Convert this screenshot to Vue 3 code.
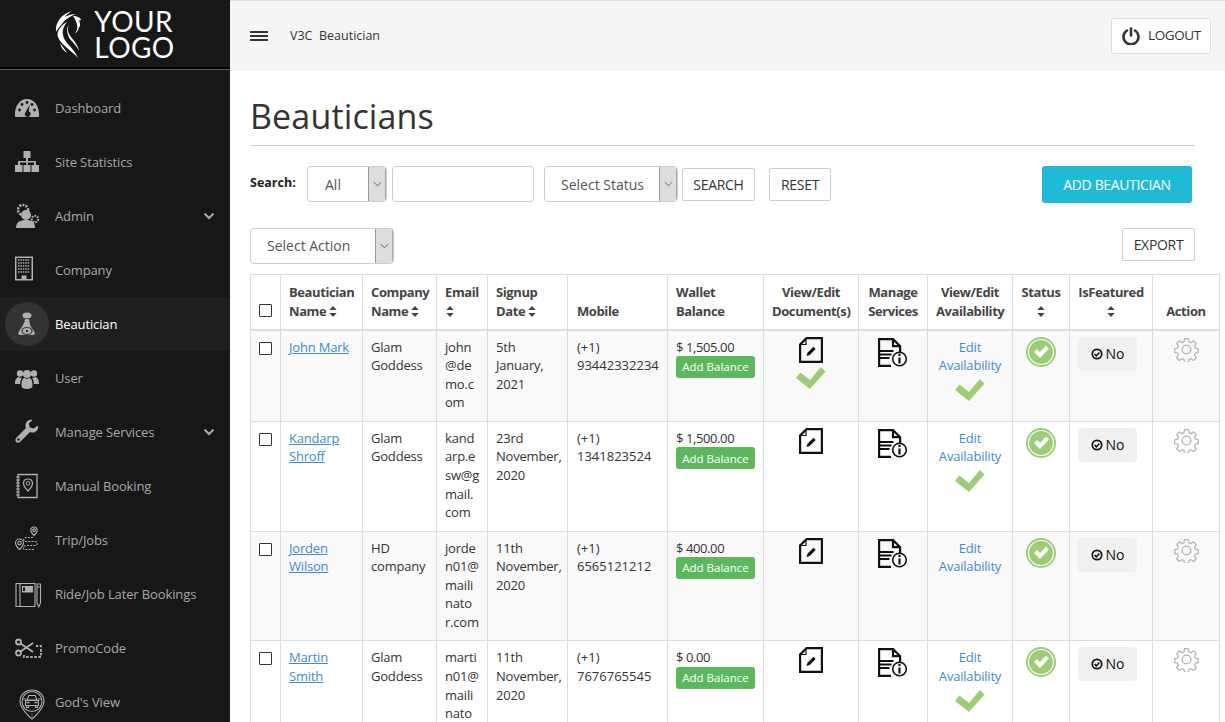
<script setup>
import { ref } from 'vue';

const menu = ref([
  { label: 'Dashboard', icon: 'gauge' },
  { label: 'Site Statistics', icon: 'org' },
  { label: 'Admin', icon: 'admin', sub: true },
  { label: 'Company', icon: 'company' },
  { label: 'Beautician', icon: 'driver', active: true },
  { label: 'User', icon: 'users' },
  { label: 'Manage Services', icon: 'wrench', sub: true },
  { label: 'Manual Booking', icon: 'manual' },
  { label: 'Trip/Jobs', icon: 'trip' },
  { label: 'Ride/Job Later Bookings', icon: 'later' },
  { label: 'PromoCode', icon: 'promo' },
  { label: "God's View", icon: 'god' },
]);

const headers = [
  { lines: ['Beautician', 'Name'], sort: 'inline' },
  { lines: ['Company', 'Name'], sort: 'inline' },
  { lines: ['Email'], sort: 'below' },
  { lines: ['Signup', 'Date'], sort: 'inline' },
  { lines: ['Mobile'] },
  { lines: ['Wallet', 'Balance'] },
  { lines: ['View/Edit', 'Document(s)'], center: true },
  { lines: ['Manage', 'Services'], center: true },
  { lines: ['View/Edit', 'Availability'], center: true },
  { lines: ['Status'], sort: 'below', center: true },
  { lines: ['IsFeatured'], sort: 'below', center: true },
  { lines: ['Action'], center: true },
];

const rows = ref([
  {
    name: ['John Mark'], company: ['Glam', 'Goddess'], email: ['john', '@de', 'mo.c', 'om'],
    date: ['5th', 'January,', '2021'], mobile: '93442332234', balance: '$ 1,505.00', docOk: true, availOk: true,
  },
  {
    name: ['Kandarp', 'Shroff'], company: ['Glam', 'Goddess'], email: ['kand', 'arp.e', 'sw@g', 'mail.', 'com'],
    date: ['23rd', 'November,', '2020'], mobile: '1341823524', balance: '$ 1,500.00', docOk: false, availOk: true,
  },
  {
    name: ['Jorden', 'Wilson'], company: ['HD', 'company'], email: ['jorde', 'n01@', 'maili', 'nato', 'r.com'],
    date: ['11th', 'November,', '2020'], mobile: '6565121212', balance: '$ 400.00', docOk: false, availOk: false,
  },
  {
    name: ['Martin', 'Smith'], company: ['Glam', 'Goddess'], email: ['marti', 'n01@', 'maili', 'nato', 'r.com'],
    date: ['11th', 'November,', '2020'], mobile: '7676765545', balance: '$ 0.00', docOk: false, availOk: true,
  },
]);
</script>

<template>
  <div class="page">
    <aside class="sidebar">
      <div class="logo">
        <svg class="logo-mark" viewBox="0 0 27 48" fill="#fff">
          <path d="M1 22C0 13 6 4 17 1c-3 2-5 3-7 6 3-2 7-3 11-3-5 2-11 5-14 10C4 17 2 20 1 22z" />
          <path d="M3 27C1 22 6 15 12 12c-3 4-5 8-4 13 1 7 7 10 11 16 2 3 3 5 4 7-3-4-8-7-12-11-3-3-6-5-8-10z" />
          <path d="M5 33c2 3 5 6 7 10-3-2-6-5-7-10z" />
          <path d="M14 14c-2 5-1 9 2 13 3 4 7 8 8 14-2-5-6-8-9-12-3-5-4-10-1-15z" />
          <path d="M18 6c4 0 8 2 8 4l-2 .5c1 3 2 5 0 7-1 3-2 5-4 6 2-3 3-6 2-9-1-3-2-6-4-8.500z" />
        </svg>
        <div class="logo-text">YOUR<br />LOGO</div>
      </div>

      <nav class="menu">
        <a v-for="item in menu" :key="item.label" class="menu-item" :class="{ active: item.active }">
          <span class="menu-ico">
            <svg viewBox="0 0 26 26" fill="#b0b0b0" stroke="none">
              <template v-if="item.icon === 'gauge'">
                <path d="M1 21C.2 11 6 4 13 4s12.800 7 12 17c0 .6-.5 1-1 1H2c-.5 0-1-.4-1-1z" />
                <g fill="#171717">
                  <circle cx="5.500" cy="15" r="1.400" /><circle cx="8" cy="9.500" r="1.400" /><circle cx="13" cy="7.500" r="1.400" /><circle cx="18" cy="9.500" r="1.400" /><circle cx="20.500" cy="15" r="1.400" />
                  <path d="M15.500 10 14.800 16.500a2.800 2.800 0 1 1-3.400 1z" />
                </g>
              </template>
              <template v-else-if="item.icon === 'org'">
                <path d="M9.500 2h7v7H14v3h7c.6 0 1 .4 1 1v3h3v7h-7.500v-7H20v-2.500h-6.200V16H16.500v7h-7v-7h2.700v-2.500H6V16h2.500v7H1v-7h3v-3c0-.6.4-1 1-1h7V9H9.500z" />
              </template>
              <template v-else-if="item.icon === 'admin'">
                <circle cx="9" cy="7" r="5" fill="none" stroke="#b0b0b0" stroke-width="2.500" stroke-dasharray="2 1.200" />
                <circle cx="21" cy="16" r="3.200" fill="none" stroke="#b0b0b0" stroke-width="2" stroke-dasharray="1.800 1" />
                <circle cx="12" cy="12" r="5" />
                <path d="M2 25c0-6 4-8 10-8s9 2 9 8z" />
              </template>
              <template v-else-if="item.icon === 'company'">
                <g transform="translate(-3 -1.500)">
                  <path fill-rule="evenodd" d="M4 1h18v24H4zM5.500 2.500v21h5V20h5v3.500h5v-21z" />
                  <path d="M7 4.500h12M7 7.500h12M7 10.500h12M7 13.500h12M7 16.500h12" stroke="#b0b0b0" stroke-width="1.500" stroke-dasharray="1.500 .9" />
                </g>
              </template>
              <template v-else-if="item.icon === 'driver'">
                <ellipse cx="13" cy="4.500" rx="4.500" ry="3" />
                <rect x="10.500" y="8" width="5" height="3" rx="1.500" />
                <path d="M10.500 11h5l1 4 4 6c.8 1.600 0 3-1.500 3h-13c-1.500 0-2.300-1.400-1.500-3l4-6z" />
                <ellipse cx="13" cy="20" rx="5" ry="3.500" fill="none" stroke="#333" stroke-width="1.200" />
                <circle cx="13" cy="20" r="1.200" fill="#333" />
              </template>
              <template v-else-if="item.icon === 'users'">
                <circle cx="6" cy="8.500" r="3.200" /><circle cx="20" cy="8.500" r="3.200" /><circle cx="13" cy="9" r="4" />
                <path d="M1 19c0-5 2-7 4-7 1 1 2 1 3 .8-1.200 1.500-1.800 3.700-1.800 6.200zM25 19c0-5-2-7-4-7-1 1-2 1-3 .8 1.200 1.500 1.800 3.700 1.800 6.200z" />
                <path d="M7.500 21c0-6 1.500-8 3-8 1.500 1 3.500 1 5 0 1.500 0 3 2 3 8 0 2-2.500 3-5.500 3s-5.500-1-5.500-3z" />
              </template>
              <template v-else-if="item.icon === 'wrench'">
                <path d="M24 6.500c.8 3-1 6.500-4.500 7-1.500.2-2.500 0-3.500-.5L6.500 22.500c-1.500 1.500-3.500 1.500-4.500.5s-1-3 .5-4.500L12 9c-.5-1-.7-2-.5-3.500C12 2 15.500.2 18.500 1L14.800 4.500l1 4 4 1z" />
                <circle cx="4.500" cy="20.500" r="1.200" fill="#171717" />
              </template>
              <template v-else-if="item.icon === 'manual'">
                <path d="M4 1.500h19v23H4z" fill="none" stroke="#b0b0b0" stroke-width="1.300" />
                <path d="M2 4h4M2 7h4M2 10h4M2 13h4M2 16h4M2 19h4M2 22h4" stroke="#b0b0b0" stroke-width="1.200" />
                <path d="M14 6c-3 0-4.500 2-4.500 4.200 0 3 4.500 7.800 4.500 7.800s4.500-4.800 4.500-7.800C18.500 8 17 6 14 6z" fill="#171717" stroke="#b0b0b0" stroke-width="1.200" />
                <circle cx="14" cy="10.300" r="1.800" fill="none" stroke="#b0b0b0" />
              </template>
              <template v-else-if="item.icon === 'trip'">
                <g fill="none" stroke="#b0b0b0" stroke-width="1.100">
                  <path d="M5.500 12c-2.500 0-4 2-4 4 0 2.700 4 6.500 4 6.500s4-3.800 4-6.500c0-2-1.500-4-4-4z" />
                  <circle cx="5.500" cy="16" r="1.700" />
                  <path d="M20 0c-2 0-3.200 1.500-3.200 3.200 0 2.200 3.200 5.300 3.200 5.300s3.200-3.100 3.200-5.300C23.200 1.500 22 0 20 0z" />
                  <circle cx="20" cy="3.200" r="1.300" />
                  <path d="M19 10.500h-7c-3 0-3 4 0 4h9c3 0 3 4 0 4h-9c-2 0-3 2-2 4h11" stroke-dasharray="2 1.200" />
                </g>
              </template>
              <template v-else-if="item.icon === 'later'">
                <g fill="none" stroke="#b0b0b0" stroke-width="1.100">
                  <path d="M2 2.500h19v23H2zM6 2.500v23" />
                  <path d="M23 3h3.500v19l-1.750 4L23 22zM23 6h3.500" />
                </g>
                <path d="M8 5h11v6.500H8z" />
                <path d="M9 6.500h2v3.500H9z" fill="#171717" />
              </template>
              <template v-else-if="item.icon === 'promo'">
                <g fill="none" stroke="#b0b0b0" stroke-width="1.800">
                  <circle cx="4.500" cy="7" r="2.500" /><circle cx="4.500" cy="18" r="2.500" />
                  <path d="M6.500 8.500 19 17M6.500 16.500 19 8" />
                  <path d="M10 20v2h17V11h-5M27 15v2" stroke-dasharray="2.500 1.600" />
                </g>
              </template>
              <template v-else-if="item.icon === 'god'">
                <g transform="translate(5 0)">
                  <g fill="none" stroke="#b0b0b0" stroke-width="1.100">
                    <path d="M13 30S1 20 1 12.500C1 5.500 6.500 1 13 1s12 4.500 12 11.500C25 20 13 30 13 30z" />
                    <circle cx="13" cy="12.500" r="10" />
                    <path d="M13 24.500v1M13 27v1" />
                    <path d="M9.800 6.500h6.400l1.800 4.500H8zM6.500 11.500h13v5h-13zM7.500 16.500v2h2v-2M16.500 16.500v2h2v-2M4 10h3M19 10h3" />
                  </g>
                  <path d="M7.500 12.800h3v1.500h-3zM15.500 12.800h3v1.500h-3z" />
                </g>
              </template>
            </svg>
          </span>
          <span class="menu-label">{{ item.label }}</span>
          <svg v-if="item.sub" class="menu-caret" viewBox="0 0 12 8" fill="none" stroke="#aaa" stroke-width="2"><path d="M1.500 1.500 6 6l4.500-4.500" /></svg>
        </a>
      </nav>
    </aside>

    <main class="main">
      <header class="topbar">
        <div class="crumbs">
          <span class="burger"><i></i><i></i><i></i></span>
          <span class="crumb">V3C&nbsp; Beautician</span>
        </div>
        <button class="logout">
          <svg viewBox="0 0 18 18" fill="none" stroke="#333" stroke-width="2.600" stroke-linecap="round"><path d="M5 3.500a7.500 7.500 0 1 0 8 0M9 1.500v7" /></svg>
          LOGOUT
        </button>
      </header>

      <section class="content">
        <h1 class="title">Beauticians</h1>

        <div class="filters">
          <div class="filter-left">
            <label class="search-label">Search:</label>
            <div class="fake-select all"><span>All</span><b class="arrow"><svg viewBox="0 0 10 6" fill="none" stroke="#555"><path d="M1 1l4 4 4-4" /></svg></b></div>
            <input class="search-input" type="text" />
            <div class="fake-select status"><span>Select Status</span><b class="arrow"><svg viewBox="0 0 10 6" fill="none" stroke="#555"><path d="M1 1l4 4 4-4" /></svg></b></div>
            <button class="btn search-btn">SEARCH</button>
            <button class="btn reset-btn">RESET</button>
          </div>
          <button class="add-btn">ADD BEAUTICIAN</button>
        </div>

        <div class="actions">
          <div class="fake-select action"><span>Select Action</span><b class="arrow"><svg viewBox="0 0 10 6" fill="none" stroke="#555"><path d="M1 1l4 4 4-4" /></svg></b></div>
          <button class="btn export-btn">EXPORT</button>
        </div>

        <table class="grid">
          <colgroup>
            <col class="c-check" /><col class="c-name" /><col class="c-company" /><col class="c-email" /><col class="c-date" /><col class="c-mobile" />
            <col class="c-wallet" /><col class="c-doc" /><col class="c-serv" /><col class="c-avail" /><col class="c-status" /><col class="c-feat" /><col class="c-act" />
          </colgroup>
          <thead>
            <tr>
              <th><input type="checkbox" class="check head-check" /></th>
              <th v-for="h in headers" :key="h.lines[0] + h.lines.length" :class="{ center: h.center }">
                <template v-for="(line, i) in h.lines" :key="line">
                  <br v-if="i > 0" />{{ line }}
                </template>
                <svg v-if="h.sort" class="sort" :class="h.sort" viewBox="0 0 10 14" fill="#444"><path d="M1 5.500 5 1l4 4.500zM1 8.500h8L5 13z" /></svg>
              </th>
            </tr>
          </thead>
          <tbody>
            <tr v-for="row in rows" :key="row.mobile">
              <td><input type="checkbox" class="check" /></td>
              <td><a class="link"><template v-for="(l, i) in row.name" :key="l"><br v-if="i > 0" />{{ l }}</template></a></td>
              <td><span v-for="l in row.company" :key="l" class="ln">{{ l }}</span></td>
              <td><span v-for="l in row.email" :key="l" class="ln">{{ l }}</span></td>
              <td><span v-for="l in row.date" :key="l" class="ln">{{ l }}</span></td>
              <td class="plain"><span class="ln">(+1)</span><span class="ln">{{ row.mobile }}</span></td>
              <td>
                <span class="ln amount">{{ row.balance }}</span>
                <button class="balance-btn">Add Balance</button>
              </td>
              <td class="center">
                <svg class="doc-ico" viewBox="0 0 24 26" fill="none" stroke="#111" stroke-width="2.200">
                  <path d="M7.500 1.100h15.400v23.800H1.100V7.500z" />
                  <path d="M7 2v5.500H2" stroke-width="1.200" />
                  <path d="M7.500 19l1-3.200 6-6 2.200 2.200-6 6z" fill="#111" stroke="none" />
                </svg>
                <svg v-if="row.docOk" class="tick" viewBox="0 0 30 22" fill="#9ccc78"><path d="M0 11 4.500 5.500 14 13 25 0l4.500 4.500L14 22z" /></svg>
              </td>
              <td class="center">
                <svg class="serv-ico" viewBox="0 0 30 29" fill="none" stroke="#111" stroke-width="2.200">
                  <path d="M13 27.900H1.100V1.100h14l7 7v6M15 1.100v7h7" />
                  <path d="M1.500 13h14M1.500 16.500h12M1.500 20h10" stroke-width="1.800" />
                  <circle cx="21.500" cy="21" r="6.800" fill="#fff" stroke-width="1.600" />
                  <path d="M21.500 19.500v6M21.500 15.800v2.200" stroke-width="2.200" />
                </svg>
              </td>
              <td class="center">
                <a class="avail">Edit<br />Availability</a>
                <svg v-if="row.availOk" class="tick" viewBox="0 0 30 22" fill="#9ccc78"><path d="M0 11 4.500 5.500 14 13 25 0l4.500 4.500L14 22z" /></svg>
              </td>
              <td class="center">
                <svg class="status-ico" viewBox="0 0 30 30"><circle cx="15" cy="15" r="15" fill="#9ccc78" /><circle cx="15" cy="15" r="12.500" fill="none" stroke="#fff" stroke-width="1.200" /><path d="M8 15l3-3 3 3 6-6.500 3 3-9 9.500z" fill="#fff" /></svg>
              </td>
              <td>
                <button class="feat-btn">
                  <svg viewBox="0 0 14 14" fill="none" stroke="#111" stroke-width="2"><circle cx="7" cy="7" r="5.500" /><path d="M4.200 7 6.300 9.200 9.800 5.300" stroke-width="1.800" /></svg>
                  No
                </button>
              </td>
              <td class="center">
                <svg class="gear" viewBox="0 0 24 24" fill="none" stroke="#b5b5b5" stroke-width="1.300" stroke-linejoin="round">
                  <circle cx="12" cy="12" r="4.200" />
                  <path d="M10 1h4l.6 3.200 1.900.8 2.700-1.800 2.800 2.800-1.800 2.700.8 1.900 3 .6v4l-3 .6-.8 1.900 1.800 2.700-2.800 2.800-2.700-1.800-1.900.8-.6 3h-4l-.6-3-1.900-.8-2.700 1.800-2.800-2.800 1.800-2.700-.8-1.900-3-.6v-4l3-.6.8-1.900-1.800-2.700 2.800-2.800 2.700 1.800 1.900-.8z" transform="translate(.7 .7) scale(.94)" />
                </svg>
              </td>
            </tr>
          </tbody>
        </table>
      </section>
    </main>
  </div>
</template>

<style>
html, body { margin: 0; height: 722px; overflow: hidden; background: #fff; }
</style>

<style scoped>
.page {
  display: flex;
  height: 722px;
  overflow: hidden;
  font-family: "Open Sans", "Noto Sans", sans-serif;
  font-size: 13px;
  line-height: 1.42857;
  color: #333;
}

.sidebar {
  flex: 0 0 230px;
  background: #171717;
  overflow: hidden;
}

.logo {
  height: 69px;
  box-sizing: border-box;
  display: flex;
  justify-content: center;
  align-items: center;
  gap: 12px;
  border-bottom: 2px solid #000;
  box-shadow: 0 1px 0 #555;
}
.logo-mark { width: 27px; height: 48px; }
.logo-text {
  font-family: Lato, sans-serif;
  font-size: 28px;
  line-height: 26px;
  color: #fff;
  letter-spacing: 0.4px;
}

.menu { padding-top: 12px; }
.menu-item {
  height: 54px;
  display: flex;
  align-items: center;
  padding-left: 14px;
  color: #a8a8a8;
  letter-spacing: -0.12px;
}
.menu-item.active { background: #1f1f1f; color: #fff; }
.menu-ico { width: 26px; height: 26px; margin-right: 15px; flex: none; }
.menu-ico svg { display: block; width: 26px; height: 26px; overflow: visible; }
.menu-item.active .menu-ico { background: #333; border-radius: 50%; box-shadow: 0 0 0 9px #333; }
.menu-caret { width: 12px; height: 8px; margin-left: auto; margin-right: 15px; }

.main { flex: 1; min-width: 0; }

.topbar {
  height: 71px;
  box-sizing: border-box;
  border-top: 1px solid #ddd;
  background: #f5f5f5;
  display: flex;
  align-items: center;
  justify-content: space-between;
  padding: 0 14px 0 20px;
}
.crumbs { display: flex; align-items: center; }
.burger { width: 18px; margin-right: 22px; }
.burger i { display: block; height: 2px; background: #333; margin: 2px 0; }
.crumb { font-size: 12.500px; color: #333; }
.logout {
  width: 100px;
  height: 36px;
  font: inherit;
  font-size: 13.500px;
  letter-spacing: -0.4px;
  color: #333;
  background: #fff;
  border: 1px solid #ddd;
  border-radius: 3px;
  display: flex;
  align-items: center;
  gap: 8px;
  padding: 0 0 0 10px;
}
.logout svg { width: 18px; height: 18px; }

.content { padding: 25px 0 0 20px; }
.title {
  margin: 0;
  width: 945px;
  height: 49px;
  font-size: 34px;
  font-weight: 400;
  line-height: 40px;
  letter-spacing: 0.15px;
  color: #333;
  border-bottom: 1px solid #ccc;
}

.filters {
  width: 942px;
  display: flex;
  justify-content: space-between;
  align-items: flex-start;
  margin-top: 20px;
}
.filter-left { display: flex; align-items: center; }
.search-label { font-weight: 700; font-size: 12.500px; width: 57px; margin-top: -3px; color: #222; }

.fake-select {
  box-sizing: border-box;
  height: 36px;
  display: flex;
  align-items: center;
  border: 1px solid #ccc;
  border-radius: 4px;
  background: #fff;
  color: #555;
  font-size: 14px;
  overflow: hidden;
}
.fake-select span { flex: 1; padding: 1px 0 0 16px; }
.fake-select.all span { padding-left: 17px; }
.fake-select.action span { padding-top: 0; }
.arrow {
  flex: none;
  width: 16px;
  height: 100%;
  background: #ddd;
  border-left: 1px solid #999;
  border-right: 1px solid #aaa;
  display: flex;
  align-items: center;
  justify-content: center;
}
.arrow svg { width: 9px; height: 6px; }
.fake-select.all { width: 80px; }
.fake-select.status { width: 134px; }
.fake-select.action { width: 144px; }

.search-input {
  box-sizing: border-box;
  width: 142px;
  height: 36px;
  margin: 0 10px 0 5px;
  border: 1px solid #ccc;
  border-radius: 4px;
}

.btn {
  box-sizing: border-box;
  height: 33px;
  font: inherit;
  font-size: 14px;
  letter-spacing: -0.3px;
  color: #333;
  background: #fff;
  border: 1px solid #ccc;
  border-radius: 2px;
  padding: 0;
}
.search-btn { width: 73px; margin-left: 4px; padding-top: 1px; }
.reset-btn { width: 62px; margin-left: 14px; padding-top: 1px; }
.export-btn { width: 73px; }

.add-btn {
  width: 150px;
  height: 37px;
  font: inherit;
  font-size: 14px;
  letter-spacing: -0.35px;
  color: #fff;
  background: #1fbad6;
  border: 0;
  border-radius: 3px;
  padding: 0;
}

.actions {
  width: 945px;
  display: flex;
  justify-content: space-between;
  align-items: flex-start;
  margin-top: 25px;
  height: 46px;
}

.grid {
  table-layout: fixed;
  width: 969px;
  border-collapse: collapse;
  letter-spacing: -0.2px;
}
.c-check { width: 30px; }
.c-name { width: 82px; }
.c-company { width: 74px; }
.c-email { width: 51px; }
.c-date { width: 80px; }
.c-mobile { width: 100px; }
.c-wallet { width: 96px; }
.c-doc { width: 95px; }
.c-serv { width: 69px; }
.c-avail { width: 85px; }
.c-status { width: 57px; }
.c-feat { width: 83px; }
.c-act { width: 67px; }

.grid th, .grid td {
  border: 1px solid #ddd;
  text-align: left;
  vertical-align: top;
}
.grid td { padding: 7px 8px 9px; }
.grid th {
  padding: 8px;
  vertical-align: bottom;
  font-weight: 700;
  color: #444;
  border-bottom-width: 2px;
  letter-spacing: -0.4px;
}
.grid th:nth-child(6), .grid td:nth-child(6) { padding-left: 9px; }
.grid th.center, .grid td.center { text-align: center; }
.grid tbody tr:nth-child(odd) { background: #f9f9f9; }
.ln { display: block; }
.plain { letter-spacing: 0; }
.amount { letter-spacing: -0.4px; }

.check {
  appearance: none;
  display: block;
  box-sizing: border-box;
  width: 13px;
  height: 13px;
  margin: 4px 0 0;
  border: 1.500px solid #333;
  border-radius: 1px;
  background: #fff;
}
.head-check { margin: 0 0 4px; }

.sort { width: 10px; height: 13px; vertical-align: -2px; margin-left: 2px; }
.sort.below { display: block; margin: 3px 0 3px; }
.center .sort.below { margin: 3px auto 3px; }

.link { color: #428bca; text-decoration: underline; }
.avail { color: #428bca; }

.balance-btn {
  display: block;
  box-sizing: border-box;
  width: 79px;
  height: 22px;
  font: inherit;
  font-size: 11.500px;
  letter-spacing: 0;
  line-height: 1;
  color: #fff;
  background: #5cb85c;
  border: 0;
  border-radius: 3px;
  padding: 0;
}

.doc-ico { display: block; width: 24px; height: 26px; margin: -1px auto 0; }
.serv-ico { display: block; width: 30px; height: 29px; margin: 0 auto; }
.tick { display: block; width: 30px; height: 22px; margin: 4px auto 0; }
.status-ico { display: block; width: 30px; height: 30px; margin: -1px auto 0; }

.feat-btn {
  width: 59px;
  height: 34px;
  margin-top: -1px;
  font: inherit;
  font-size: 14px;
  letter-spacing: 0;
  color: #111;
  background: #f0f0f0;
  border: 0;
  border-radius: 4px;
  display: flex;
  align-items: center;
  justify-content: center;
  gap: 3px;
  padding: 0;
}
.feat-btn svg { width: 12px; height: 12px; }

.gear { display: block; width: 25px; height: 25px; margin: -1px auto 0; }
</style>
